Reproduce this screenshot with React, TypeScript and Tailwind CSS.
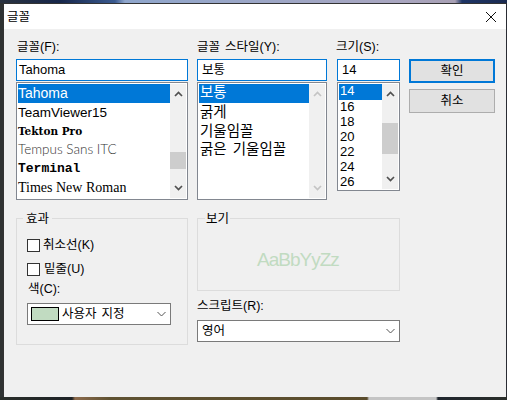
import React from "react";

function Up({ light }: { light?: boolean }) {
  return (
    <svg width="9" height="6" viewBox="0 0 9 6" fill="none" stroke={light ? "#c4c4c4" : "#505050"} strokeWidth="1.7">
      <path d="M1 5l3.5-3.5L8 5" />
    </svg>
  );
}
function Down({ light }: { light?: boolean }) {
  return (
    <svg width="9" height="6" viewBox="0 0 9 6" fill="none" stroke={light ? "#c4c4c4" : "#505050"} strokeWidth="1.7">
      <path d="M1 1l3.5 3.5L8 1" />
    </svg>
  );
}
function Chev() {
  return (
    <svg width="9" height="6" viewBox="0 0 9 6" fill="none" stroke="#555" strokeWidth="1">
      <path d="M.5 1l4 4 4-4" />
    </svg>
  );
}

function Scroll({ top, h, light }: { top: number; h: number; light?: boolean }) {
  return (
    <div className="relative flex w-[16px] shrink-0 flex-col items-center justify-between bg-[#f0f0f0] py-[7px]">
      <Up light={light} />
      {h > 0 && <div className="absolute left-0 right-0 bg-[#cdcdcd]" style={{ top, height: h }} />}
      <Down light={light} />
    </div>
  );
}

export default function App() {
  return (
    <div className="flex h-[400px] w-[507px] flex-col overflow-hidden bg-[#20262e] font-['Liberation_Sans','Noto_Sans_CJK_KR',sans-serif] text-[12.5px] leading-[16px] text-black [word-spacing:1.5px]">
      <div className="h-[3px] bg-[linear-gradient(90deg,#2b3340_0,#16264a_60px,#3a5a90_115px,#8fa6cc_125px,#a9a6c0_400px,#a8a0b4_455px,#1e3566_462px,#1a2a50_507px)]" />
      <div className="flex">
        <div className="w-[3px] shrink-0 bg-[#2f3232]" />
        <div className="h-[394px] w-[503px] border-l border-t border-[#333] bg-[#f0f0f0]">
          <div className="flex h-[25px] items-center justify-between bg-white pl-[3px] pr-[9px]">
            <span>글꼴</span>
            <svg width="12" height="12" viewBox="0 0 12 12" stroke="#111" strokeWidth="1" fill="none">
              <path d="M1 1l10 10M11 1L1 11" />
            </svg>
          </div>
          <div className="flex pl-[12px] pt-[10px]">
            <div className="w-[172px]">
              <div className="h-[20px] pl-px">글꼴(F):</div>
              <div className="flex h-[22px] items-center border border-[#0078d7] bg-white pl-[2px] text-[13px]">Tahoma</div>
              <div className="mt-[1px] flex h-[118px] border border-[#828790] bg-white p-[1px]">
                <div className="flex-1 text-[14px] leading-[19px] [word-spacing:0]">
                  <div className="h-[19px] bg-[#0078d7] text-white">Tahoma</div>
                  <div className="h-[19px] text-[13.5px]">TeamViewer15</div>
                  <div className="h-[18px] whitespace-nowrap font-['DejaVu_Serif'] text-[10.5px] font-bold leading-[18px]">Tekton Pro</div>
                  <div className="h-[18px] whitespace-nowrap font-['Lato'] text-[13.5px] font-light leading-[18px] text-[#333]">Tempus Sans ITC</div>
                  <div className="h-[21px] font-['Liberation_Mono'] text-[13px] font-bold leading-[21px]">Terminal</div>
                  <div className="h-[18px] font-['Liberation_Serif'] leading-[18px]">Times New Roman</div>
                </div>
                <Scroll top={68} h={17} />
              </div>
            </div>
            <div className="ml-[9px] w-[130px]">
              <div className="h-[20px] whitespace-nowrap">글꼴 스타일(Y):</div>
              <div className="flex h-[22px] items-center border border-[#0078d7] bg-white pl-[4px]">보통</div>
              <div className="mt-[1px] flex h-[118px] border border-[#828790] bg-white p-[1px]">
                <div className="flex-1 text-[14.5px] leading-[18px] [word-spacing:2px]">
                  <div className="h-[19px] bg-[#0078d7] pl-px leading-[17px] text-white">보통</div>
                  <div className="h-[19px] pl-px">굵게</div>
                  <div className="h-[18px] pl-px">기울임꼴</div>
                  <div className="h-[19px] whitespace-nowrap pl-px">굵은 기울임꼴</div>
                </div>
                <Scroll top={0} h={0} light />
              </div>
            </div>
            <div className="ml-[10px] w-[63px]">
              <div className="-ml-px h-[20px] whitespace-nowrap">크기(S):</div>
              <div className="flex h-[22px] items-center border border-[#0078d7] bg-white pl-[4px] text-[13px]">14</div>
              <div className="mt-[1px] flex h-[109px] border border-[#828790] bg-white p-[1px]">
                <div className="flex-1 text-[13px] leading-[15px]">
                  <div className="h-[16px] bg-[#0078d7] pl-px leading-[14px] text-white">14</div>
                  <div className="-mt-px">
                    {[16, 18, 20, 22, 24, 26].map((n) => (
                      <div key={n} className="pl-px">{n}</div>
                    ))}
                  </div>
                </div>
                <Scroll top={39} h={31} />
              </div>
            </div>
            <div className="ml-[9px] flex w-[86px] flex-col gap-[6px] pt-[20px]">
              <div className="flex h-[24px] items-center justify-center border-2 border-[#0078d7] bg-[#e1e1e1]">확인</div>
              <div className="flex h-[24px] items-center justify-center border border-[#adadad] bg-[#e1e1e1]">취소</div>
            </div>
          </div>
          <div className="flex pl-[12px] pt-[10px]">
            <fieldset className="h-[135px] w-[172px] border border-[#dcdcdc] pl-[10px]">
              <legend className="ml-[-4px] px-[3px] pt-[2px] leading-[14px]">효과</legend>
              <label className="mt-[12px] flex h-[14px] items-center gap-[3px]">
                <span className="h-[13px] w-[13px] border border-[#333] bg-white" />
                <span>취소선(K)</span>
              </label>
              <label className="mt-[10px] flex h-[14px] items-center gap-[4px]">
                <span className="h-[13px] w-[13px] border border-[#333] bg-white" />
                <span>밑줄(U)</span>
              </label>
              <div className="mt-[5px] pl-px">색(C):</div>
              <div className="mt-[6px] flex h-[22px] w-[144px] items-center border border-[#7a7a7a] bg-white pl-[3px] pr-[4px]">
                <span className="h-[14px] w-[28px] border border-black bg-[#c1dbc1]" />
                <span className="ml-[3px] flex-1">사용자 지정</span>
                <Chev />
              </div>
            </fieldset>
            <div className="ml-[9px] w-[203px]">
              <fieldset className="h-[81px] border border-[#dcdcdc] pl-[7px]">
                <legend className="px-[1px] pt-[2px] leading-[14px]">보기</legend>
                <div className="pl-[52px] pt-[23px] text-[19px] leading-[22px] tracking-[-1px] text-[#c1dbc1]">AaBbYyZz</div>
              </fieldset>
              <div className="mt-[7px] leading-[16px]">스크립트(R):</div>
              <div className="mt-[6px] flex h-[22px] items-center justify-between border border-[#7a7a7a] bg-white pl-[4px] pr-[4px]">
                <span>영어</span>
                <Chev />
              </div>
            </div>
          </div>
        </div>
        <div className="flex-1 bg-[#2a2c33]" />
      </div>
      <div className="h-[3px] bg-[linear-gradient(90deg,#2a2e2a_0,#1d2226_72px,#8c6a4c_75px,#5f5232_110px,#5a4c2c_367px,#c4c4c4_369px,#c4c4c4_436px,#20262e_438px,#2a2e2a_507px)]" />
    </div>
  );
}
